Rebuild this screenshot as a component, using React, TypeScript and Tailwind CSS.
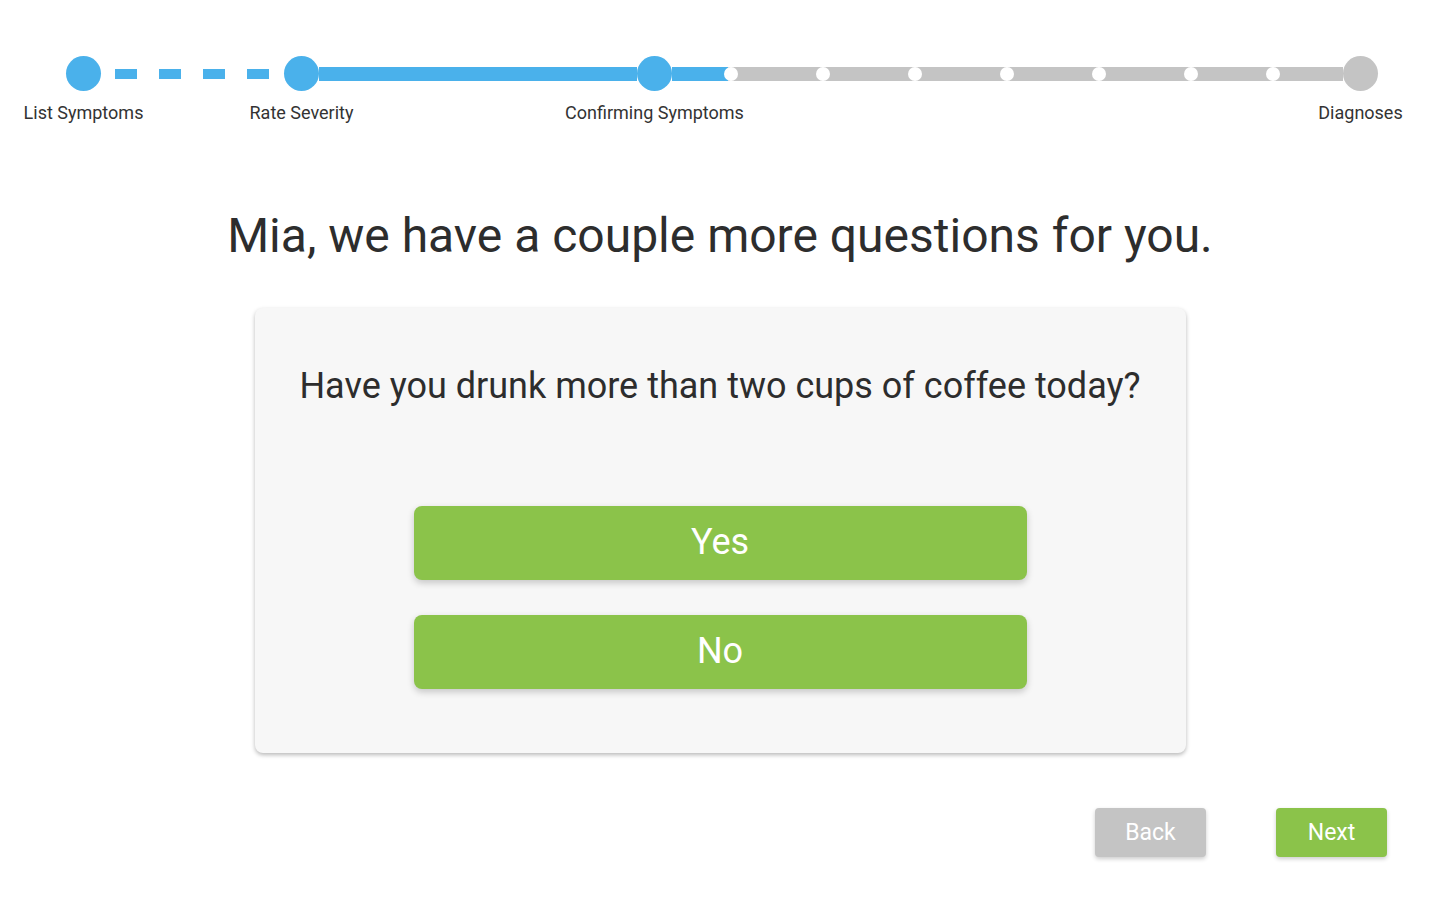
import React from "react";

const Dot = ({ first = false }: { first?: boolean }) => (
  <div
    className={`h-[14px] w-[14px] shrink-0 ${
      first
        ? "bg-[linear-gradient(to_right,#4ab1eb_4px,#c4c4c4_4px)]"
        : "bg-[#c4c4c4]"
    }`}
  >
    <div className="h-full w-full rounded-full bg-white" />
  </div>
);

function Step({ label, done }: { label: string; done: boolean }) {
  return (
    <div
      className={`relative h-[35px] w-[35px] shrink-0 rounded-full ${
        done ? "bg-[#4ab1eb]" : "bg-[#c4c4c4]"
      }`}
    >
      <span className="absolute left-1/2 top-full mt-[11px] -translate-x-1/2 whitespace-nowrap text-[18px] leading-[21px] text-[#333]">
        {label}
      </span>
    </div>
  );
}

function Stepper() {
  return (
    <div className="flex items-center pl-[66px] pt-[56px]">
      <Step label="List Symptoms" done />
      <div className="flex w-[183px] items-center gap-[22px] pl-[14px]">
        <div className="h-[10px] w-[22px] bg-[#4ab1eb]" />
        <div className="h-[10px] w-[22px] bg-[#4ab1eb]" />
        <div className="h-[10px] w-[22px] bg-[#4ab1eb]" />
        <div className="h-[10px] w-[22px] bg-[#4ab1eb]" />
      </div>
      <Step label="Rate Severity" done />
      <div className="h-[14px] w-[318px] bg-[#4ab1eb]" />
      <Step label="Confirming Symptoms" done />
      <div className="h-[14px] w-[52px] bg-[#4ab1eb]" />
      <Dot first />
      <div className="h-[14px] w-[78px] bg-[#c4c4c4]" />
      <Dot />
      <div className="h-[14px] w-[78px] bg-[#c4c4c4]" />
      <Dot />
      <div className="h-[14px] w-[78px] bg-[#c4c4c4]" />
      <Dot />
      <div className="h-[14px] w-[78px] bg-[#c4c4c4]" />
      <Dot />
      <div className="h-[14px] w-[78px] bg-[#c4c4c4]" />
      <Dot />
      <div className="h-[14px] w-[68px] bg-[#c4c4c4]" />
      <Dot />
      <div className="h-[14px] w-[63px] bg-[#c4c4c4]" />
      <Step label="Diagnoses" done={false} />
    </div>
  );
}

export default function App() {
  return (
    <div className="min-h-screen bg-white font-['Roboto',sans-serif]">
      <Stepper />

      <h1 className="mt-[117px] text-center text-[48px] font-normal leading-[56px] text-[#2d2d2d]">
        Mia, we have a couple more questions for you.
      </h1>

      <div className="mx-auto mt-[44px] flex w-[931px] flex-col items-center rounded-[8px] bg-[#f7f7f7] pb-[64px] pt-[57px] shadow-[0_2px_4px_rgba(0,0,0,0.28)]">
        <p className="text-[36px] leading-[42px] text-[#2d2d2d]">
          Have you drunk more than two cups of coffee today?
        </p>

        <div className="mt-[99px] flex flex-col gap-[35px]">
          <button className="h-[74px] w-[613px] rounded-[8px] bg-[#8bc34a] pb-[2px] text-[36px] text-white shadow-[0_3px_7px_rgba(0,0,0,0.2)]">
            Yes
          </button>
          <button className="h-[74px] w-[613px] rounded-[8px] bg-[#8bc34a] pb-[2px] text-[36px] text-white shadow-[0_3px_7px_rgba(0,0,0,0.2)]">
            No
          </button>
        </div>
      </div>

      <div className="mt-[55px] flex justify-end gap-[70px] pr-[53px]">
        <button className="h-[49px] w-[111px] rounded-[4px] bg-[#c4c4c4] pt-[2px] text-[23px] text-white shadow-[0_2px_4px_rgba(0,0,0,0.2)]">
          Back
        </button>
        <button className="h-[49px] w-[111px] rounded-[4px] bg-[#8bc34a] pt-[2px] text-[23px] text-white shadow-[0_2px_4px_rgba(0,0,0,0.2)]">
          Next
        </button>
      </div>
    </div>
  );
}
